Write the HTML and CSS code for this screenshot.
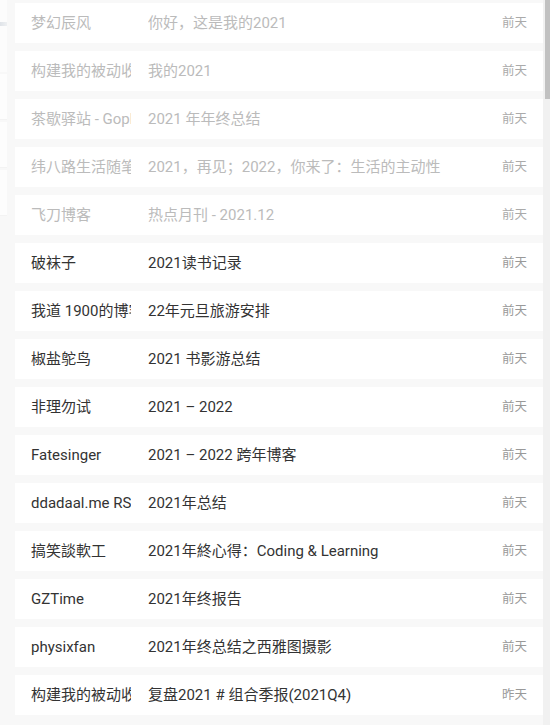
FILE: index.html
```html
<!DOCTYPE html>
<html lang="zh-CN">
<head>
<meta charset="utf-8">
<title>订阅列表</title>
<link rel="stylesheet" href="styles.css">
</head>
<body>
<div class="page">
  <div class="side">
    <div class="side-top"><div class="side-line"></div></div>
    <div class="side-block"></div>
    <div class="side-block"></div>
    <div class="side-block"></div>
  </div>
  <div class="list">
    <div class="row read"><span class="name">梦幻辰风</span><span class="title">你好，这是我的2021</span><span class="time">前天</span></div>
    <div class="row read"><span class="name">构建我的被动收入</span><span class="title">我的2021</span><span class="time">前天</span></div>
    <div class="row read"><span class="name">茶歇驿站 - Gopher</span><span class="title">2021 年年终总结</span><span class="time">前天</span></div>
    <div class="row read"><span class="name">纬八路生活随笔</span><span class="title">2021，再见；2022，你来了：生活的主动性</span><span class="time">前天</span></div>
    <div class="row read"><span class="name">飞刀博客</span><span class="title">热点月刊 - 2021.12</span><span class="time">前天</span></div>
    <div class="row"><span class="name">破袜子</span><span class="title">2021读书记录</span><span class="time">前天</span></div>
    <div class="row"><span class="name">我道 1900的博客</span><span class="title">22年元旦旅游安排</span><span class="time">前天</span></div>
    <div class="row"><span class="name">椒盐鸵鸟</span><span class="title">2021 书影游总结</span><span class="time">前天</span></div>
    <div class="row"><span class="name">非理勿试</span><span class="title">2021 – 2022</span><span class="time">前天</span></div>
    <div class="row"><span class="name">Fatesinger</span><span class="title">2021 – 2022 跨年博客</span><span class="time">前天</span></div>
    <div class="row"><span class="name">ddadaal.me RSS</span><span class="title">2021年总结</span><span class="time">前天</span></div>
    <div class="row"><span class="name">搞笑談軟工</span><span class="title">2021年終心得：Coding &amp; Learning</span><span class="time">前天</span></div>
    <div class="row"><span class="name">GZTime</span><span class="title">2021年终报告</span><span class="time">前天</span></div>
    <div class="row"><span class="name">physixfan</span><span class="title">2021年终总结之西雅图摄影</span><span class="time">前天</span></div>
    <div class="row"><span class="name">构建我的被动收入</span><span class="title">复盘2021 # 组合季报(2021Q4)</span><span class="time">昨天</span></div>
  </div>
  <div class="scrollbar"><div class="thumb"></div></div>
</div>
</body>
</html>
```

FILE: styles.css
```css
html, body {
  margin: 0;
  padding: 0;
  background: #f8f8f8;
  overflow: hidden;
}

.page {
  display: flex;
  height: 725px;
  font-family: Roboto, "Noto Sans CJK SC", sans-serif;
}

.side {
  width: 7px;
  flex: none;
  display: flex;
  flex-direction: column;
  gap: 2px;
}

.side-top {
  height: 72px;
  background: #fcfcfc;
  padding-top: 22px;
  box-sizing: border-box;
}

.side-line {
  height: 4px;
  background: linear-gradient(90deg, #dfe3e8, #eef0f2);
}

.side-block {
  height: 45px;
  background: #fdfdfd;
  border-bottom: 1px solid #f3f3f3;
}

.list {
  flex: 1;
  min-width: 0;
  height: 725px;
  overflow: hidden;
  padding: 3px 0 0 8px;
  box-sizing: border-box;
  display: flex;
  flex-direction: column;
  gap: 8px;
}

.scrollbar {
  width: 7px;
  flex: none;
  background: #f1f1f1;
  display: flex;
  justify-content: flex-end;
}

.thumb {
  width: 5px;
  height: 99px;
  background: #c1c1c1;
}

.row {
  flex: none;
  height: 40px;
  background: #fff;
  display: flex;
  align-items: center;
  padding: 0 16px;
  font-size: 15px;
  line-height: 20px;
  color: #333;
}

.name {
  width: 100px;
  flex: none;
  white-space: nowrap;
  overflow: hidden;
  margin-right: 17px;
  height: 20px;
}

.title {
  flex: 1;
  min-width: 0;
  white-space: nowrap;
  overflow: hidden;
  height: 20px;
}

.time {
  flex: none;
  font-size: 12.5px;
  color: #999;
  margin-left: 12px;
  height: 20px;
}

.row.read .name,
.row.read .title {
  color: #bbb;
}

.row.read .time {
  color: #aaa;
}
```
